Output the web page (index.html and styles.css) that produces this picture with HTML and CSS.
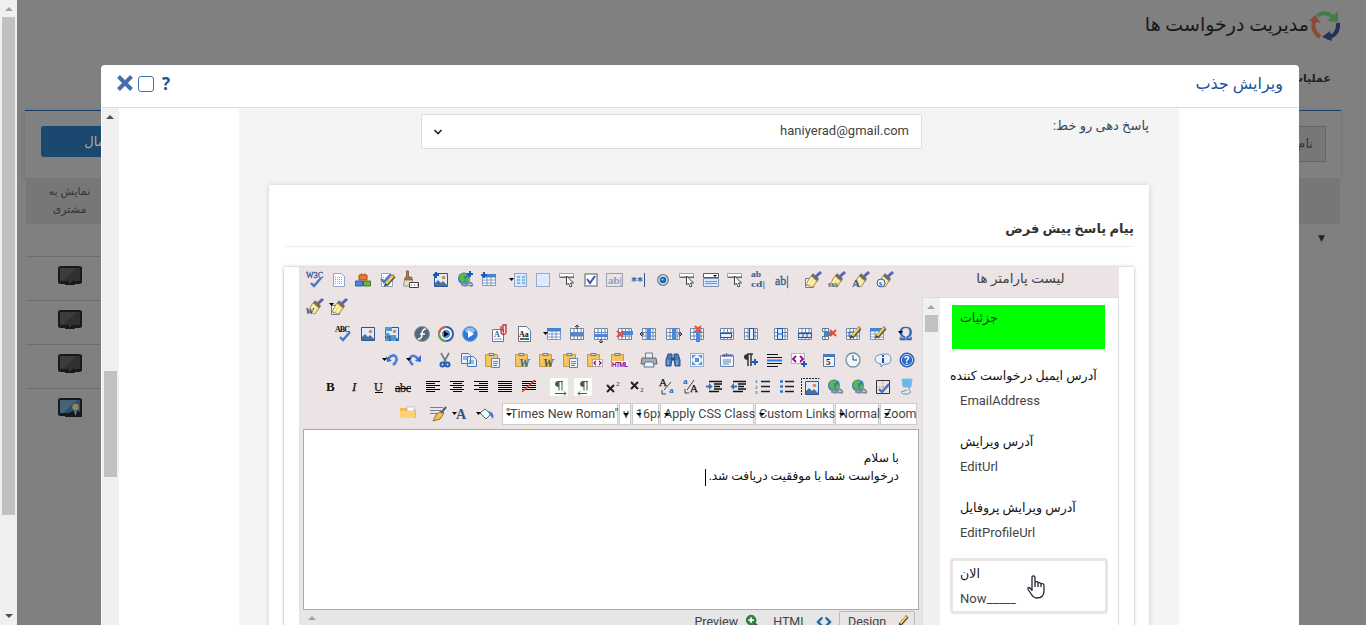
FILE: index.html
```html
<!DOCTYPE html>
<html lang="fa">
<head>
<meta charset="utf-8">
<title>مدیریت درخواست ها</title>
<link rel="stylesheet" href="styles.css">
</head>
<body>
<svg class="defs" aria-hidden="true">
  <symbol id="img" viewBox="0 0 16 16"><path fill="#dcecff" stroke="#2757a0" d="M1.500 1.500h13v13h-13z"/><path fill="#536c94" d="M2 14v-3l3-3 3 3 2-2 4 4v1z"/><circle cx="10.500" cy="5.500" r="1.800" fill="#e9853b"/></symbol>
  <symbol id="grid" viewBox="0 0 16 16"><path fill="#fff" stroke="#6d86ab" d="M1.500 2.500h13v11h-13zM1.500 6.500h13M1.500 10h13M5 2.500v11M8.500 2.500v11M12 2.500v11"/></symbol>
  <symbol id="table" viewBox="0 0 16 16"><path fill="#fff" stroke="#7d9ac6" d="M1.500 2.500h13v11h-13zM1.500 8h13M1.500 11h13M6 5v9M10 5v9"/><path fill="#4681d2" d="M1 2h14v3.500h-14z"/></symbol>
  <symbol id="page" viewBox="0 0 16 16"><path fill="#fff" stroke="#8ba6ca" d="M2.500 1.500h8l3 3v10h-11z"/><path stroke="#91a9ca" stroke-dasharray="1 1" d="M4 5.500h7M4 7.500h8M4 9.500h8M4 11.500h8"/></symbol>
  <symbol id="check" viewBox="0 0 16 16"><path fill="none" stroke="#4775c6" stroke-width="2.300" d="M4 11l3 3 7-8"/></symbol>
  <symbol id="globe" viewBox="0 0 16 16"><circle cx="7" cy="6.500" r="6" fill="#2d78c8"/><path fill="#5db743" d="M3 2l5-1 2 2-3 2 1 3-3 3-3-4zm7 3l3 1-2 5-3-2z"/><path fill="none" stroke="#778da2" stroke-width="1.800" d="M5 12q2-3 4 0t-4 1zm5 0q3-3 5 0t-5 1"/></symbol>
  <symbol id="plus" viewBox="0 0 16 16"><path stroke="#2058b8" stroke-width="2" d="M3 0v6M0 3h6"/></symbol>
  <symbol id="button" viewBox="0 0 16 16"><path fill="#fff" stroke="#94a7b4" d="M.5 1.500h14v4h-14z"/><path fill="#536e80" d="M1 4.500h14v1.500h-14z"/><path fill="#fff" stroke="#444" d="M7.500 4v9l2-2 1.500 4 2-1-1.500-3h3z"/></symbol>
  <symbol id="dd" viewBox="0 0 16 16"><path d="M-2 6h5l-2.500 3z"/></symbol>
  <symbol id="brush" viewBox="0 0 16 16"><path fill="#f6dc80" stroke="#9a854b" stroke-width=".8" d="M5 5l3-2 5 5-5 7-7-2z"/><path stroke="#fff8c6" stroke-width="1.500" d="M7 6l-4 6m6-4l-3 6"/><path stroke="#6f6d64" stroke-width="3.200" d="M7 2.500l6 5.500"/><path stroke="#5861b5" stroke-width="3" d="M11 4.500L16 0"/></symbol>
  <symbol id="pencil" viewBox="0 0 16 16"><path stroke="#5a5135" stroke-width="4" d="M6 12l8-9"/><path stroke="#f2ce5c" stroke-width="2.400" d="M6 11l7-8"/><path fill="#333" d="M4 14l1-4 2 2z"/><path stroke="#d37b73" stroke-width="3" d="M13 3l1-1"/></symbol>
  <symbol id="clip" viewBox="0 0 16 16"><path fill="#f5c45c" stroke="#c19b53" d="M.5 2.500h12v12h-12z"/><path fill="#ddd" stroke="#777" d="M4 3.500v-2h5v2z"/></symbol>
  <symbol id="sheet" viewBox="0 0 16 16"><path fill="#eef5ff" stroke="#6482a9" d="M6.500 6.500h8v9h-8zM8 9.500h5M8 11.500h5M8 13.500h4"/></symbol>
  <symbol id="redx" viewBox="0 0 16 16"><path stroke="#f04b30" stroke-width="2" d="M0 5l6 6m0-6l-6 6"/></symbol>
  <symbol id="mon" viewBox="0 0 24 19"><rect width="24" height="18" rx="2.500" fill="#18181e"/><path fill="#303030" d="M2 2h20v13h-20z"/><path fill="#3c3c3c" d="M2 2h17l-14 13h-3z"/><path fill="#18181e" d="M7 17h10v2h-10z"/><path fill="#55555d" d="M11 15.500h2v1h-2z"/></symbol>
</svg>

<div class="scrollbar outer"><i class="up faded"></i><div class="thumb"></div><i class="down"></i></div>
<main class="page">
  <header class="top"><svg class="logo" viewBox="0 0 32 32"><g fill="none" stroke-width="4"><path stroke="#437c49" d="M8 6q8-6 16 1"/><path stroke="#8a4b35" d="M6 9q-5 11 5 18"/><path stroke="#24315b" d="M29 13q1 12-11 15"/></g><path fill="#437c49" d="M29 1v11l-11-1z"/><path fill="#8a4b35" d="M0 11L6 5l6 8z"/><path fill="#24315b" d="M13 27l8-6 2 10z"/></svg><h1>مدیریت درخواست ها</h1></header>
  <div class="optitle">عملیات</div>
  <section class="filter"><div class="name">نام</div><div class="apply">اعمال</div></section>
  <div class="thead"><span>نمایش به<br>مشتری</span></div>
  <div class="trow first"><b>▼</b></div>
  <div class="trow"><svg><use href="#mon"/></svg></div>
  <div class="trow"><svg><use href="#mon"/></svg></div>
  <div class="trow"><svg><use href="#mon"/></svg></div>
  <div class="trow"><svg viewBox="0 0 24 19"><use href="#mon" width="24" height="19"/><path fill="#2d506f" d="M2 2h20v13h-20z"/><path fill="#466075" d="M2 2h17l-14 13h-3z"/><path fill="#18181c" d="M11 19v-4l4-2h5l4 2v4z"/><circle cx="17.500" cy="9" r="3.200" fill="#9b8450"/><path fill="#718294" d="M16 13h3l-1.500 5z"/></svg></div>
</main>

<div class="modal">
  <div class="mhead">
    <svg class="x" viewBox="0 0 16 16"><path stroke="#456faa" stroke-width="4" d="M1.500 1.500l13 13m0-13l-13 13"/></svg><i class="max"></i><b class="help">?</b>
    <h2>ویرایش جذب</h2>
  </div>
  <div class="mbody">
    <div class="scrollbar inner"><i class="up"></i><div class="thumb"></div></div>
    <div class="form">
      <div class="field"><label>پاسخ دهی رو خط:</label><div class="select"><svg viewBox="0 0 10 8"><path d="M1.500 2l3.500 3.500 3.500-3.500" fill="none" stroke="#222" stroke-width="1.600"/></svg><span>haniyerad@gmail.com</span></div></div>
      <div class="card">
        <h3>پیام پاسخ پیش فرض</h3>
        <div class="box"><div class="editor">
          <div class="work">
            <div class="tools">
              <div class="tr">
                <div class="g">
                  <svg viewBox="0 0 16 16"><text class="serif thinblue" x="-1" y="6" font-size="8" textLength="17">W3C</text><use href="#check"/></svg>
                  <svg><use href="#page"/></svg>
                  <svg viewBox="0 0 16 16"><path fill="#ef7728" stroke="#b44d20" d="M4 3h2v-1h1v1h2v-1h1v1h2v5h-8z"/><path fill="#4889da" stroke="#315f9e" d="M.5 9h7v5h-7z"/><path fill="#70b43a" stroke="#45762e" d="M8.500 9h7v5h-7z"/></svg>
                  <svg viewBox="0 0 16 16"><use href="#page"/><use href="#check" x="-2" y="-4"/><use href="#pencil" x="1" y="1"/></svg>
                  <svg viewBox="0 0 16 16"><path fill="#b17848" stroke="#67472f" stroke-width=".7" d="M3.500-1h2v6h3l1 3h-8l1-3h1z"/><path fill="#e8dcc4" stroke="#777" stroke-width=".7" d="M1.500 8h8l-1 6h-8z"/><path fill="#fff" stroke="#444" d="M6.500 10.500h9v5h-9z"/><path stroke="#333" stroke-dasharray="1 2" d="M8 13h7"/></svg>
                </div>
                <div class="g">
                  <svg viewBox="0 0 16 16"><use href="#img"/><use href="#plus"/></svg>
                  <svg viewBox="0 0 16 16"><use href="#globe"/><use href="#plus" x="10" y="-1"/></svg>
                  <svg viewBox="0 0 16 16"><use href="#table"/><use href="#plus"/></svg>
                </div>
                <div class="g">
                  <svg viewBox="0 0 16 16"><path fill="#d7e8ff" stroke="#486c96" stroke-dasharray="1 1" d="M3.500 1.500h12v13h-12z"/><path stroke="#258ad0" d="M6 5h3m2 0h3M6 8h3m2 0h3M6 11h3m2 0h3"/><use href="#dd"/></svg>
                  <svg viewBox="0 0 16 16"><path fill="#dceaff" stroke="#4f6d94" stroke-dasharray="1 1" d="M1.500 1.500h13v13h-13z"/></svg>
                  <svg><use href="#button"/></svg>
                  <svg viewBox="0 0 16 16"><path fill="#fff" stroke="#8a8f96" stroke-width="1.500" d="M2 2h12v12h-12z"/><path fill="none" stroke="#3858a0" stroke-width="2" d="M4 7l3 4 5-7"/></svg>
                  <svg viewBox="0 0 16 16"><path fill="none" stroke="#4c5e80" stroke-dasharray="1 1" d="M-.5 1.500h16v13h-16z"/><text class="serif pale" x="1" y="12" font-size="11">ab|</text></svg>
                  <svg viewBox="0 0 16 16"><text class="serif" x="0" y="13" font-size="12">**</text><path stroke="#38518e" d="M13.500 1v14"/></svg>
                  <svg viewBox="0 0 16 16"><circle cx="8" cy="8" r="5.300" fill="#d9e6ed" stroke="#6f7b83" stroke-width="1.300"/><circle cx="8" cy="8" r="3.300" fill="#176bb0"/><circle cx="7.500" cy="7.500" r="1" fill="#a8dff5"/></svg>
                  <svg><use href="#button"/></svg>
                  <svg viewBox="0 0 16 16"><path fill="#fff" stroke="#565d65" d="M.5 1.500h15v4h-15z"/><path fill="#dceaff" stroke="#7891bb" d="M.5 6.500h15v8h-15zM2 9.500h12M2 11.500h12"/><path d="M10 3h4l-2 2z"/></svg>
                  <svg><use href="#button"/></svg>
                  <svg viewBox="0 0 16 16"><text class="serif" x="0" y="5" font-size="8" textLength="10" lengthAdjust="spacingAndGlyphs">ab</text><text class="serif" x="0" y="15" font-size="8" textLength="14" lengthAdjust="spacingAndGlyphs">cd|</text></svg>
                  <svg viewBox="0 0 16 16"><text class="serif thinblue" x="0" y="13" font-size="12">ab|</text></svg>
                </div>
                <div class="g">
                  <svg viewBox="0 0 16 16"><use href="#sheet" x="-6"/><use href="#brush"/></svg>
                  <svg viewBox="0 0 16 16"><use href="#brush"/><text class="serif" x="-1" y="15" font-size="8">css</text></svg>
                  <svg viewBox="0 0 16 16"><use href="#brush"/><text class="serif" x="-1" y="15" font-size="11">A</text></svg>
                  <svg viewBox="0 0 16 16"><use href="#brush"/><circle cx="4" cy="11" r="4" fill="#eef2ff" stroke="#365eab"/><text class="serif" x="2" y="14" font-size="8">s</text></svg>
                </div>
              </div>
              <div class="tr"><div class="g">
                <svg viewBox="0 0 16 16"><use href="#brush"/><text class="serif it" x="-1" y="15" font-size="12">w</text></svg>
                <svg viewBox="0 0 16 16"><use href="#sheet" x="-6"/><use href="#brush"/><use href="#dd" y="-2"/></svg>
              </div></div>
              <div class="tr end">
                <div class="g shift">
                  <svg viewBox="0 0 16 16"><text class="serif black" x="-1" y="6" font-size="8" textLength="15">ABC</text><use href="#check"/></svg>
                  <svg><use href="#img"/></svg>
                  <svg viewBox="0 0 16 16"><use href="#img"/><path fill="#4d99d9" d="M1 1h7v4h-7zM1 7h4v3h-4zM1 12h4v3h-4zM7 9h5v6h-5z"/></svg>
                </div>
                <div class="g shift">
                  <svg viewBox="0 0 16 16"><circle cx="8" cy="8" r="7.500" fill="#56677a" stroke="#8d98a2"/><path fill="none" stroke="#fff" stroke-width="1.500" d="M12 3q-4 0-4 5t-4 5M6 8h5"/></svg>
                  <svg viewBox="0 0 16 16"><circle cx="8" cy="8" r="7" fill="#fff" stroke="#315ea7" stroke-width="2"/><path fill="none" stroke="#e46534" stroke-width="2" d="M1 8A7 7 0 0 1 8 1"/><path fill="none" stroke="#6dab3f" stroke-width="2" d="M1 8a7 7 0 0 0 7 7"/><circle cx="8" cy="8" r="4.300" fill="#568dda"/><path d="M6 5l5 3-5 3z"/></svg>
                  <svg viewBox="0 0 16 16"><circle cx="8" cy="8" r="7.500" fill="#2979df" stroke="#87a7d4"/><ellipse cx="8" cy="4.500" rx="5" ry="3" fill="#8dbdf3"/><path fill="#fff" d="M6 4l6 4-6 4z"/></svg>
                </div>
                <div class="g shift">
                  <svg viewBox="0 0 16 16"><path fill="#fff" stroke="#667995" d="M.5 3.500h11v12h-11z"/><text class="serif" x="2" y="11" font-size="8">A</text><path stroke="#879ab5" d="M2 13h8"/><path fill="none" stroke="#bb3030" stroke-width="1.300" d="M9 0v7q3 3 5 0v-8h-3v7"/></svg>
                  <svg viewBox="0 0 16 16"><path fill="#fff" stroke="#6d7782" d="M2.500.5h8l4 4v11h-12z"/><text class="serif black" x="3" y="11" font-size="8">Aa</text><path stroke="#b53c32" stroke-width="2" d="M4 13h3"/><path stroke="#3d963a" stroke-width="2" d="M7 13h3"/><path stroke="#4558c1" stroke-width="2" d="M10 13h3"/></svg>
                </div>
                <div class="g">
                  <svg viewBox="0 0 16 16"><use href="#table" x="1"/><use href="#dd" x="0"/></svg>
                  <svg viewBox="0 0 16 16"><use href="#grid"/><path fill="#4d86df" d="M1 7h14v3h-14z"/><path fill="none" stroke="#234" d="M8 3v-4m-2 2l2-2 2 2"/></svg>
                  <svg viewBox="0 0 16 16"><use href="#grid"/><path fill="#4d86df" d="M1 8h14v3h-14z"/><path fill="none" stroke="#234" d="M8 13v4m-2-2l2 2 2-2"/></svg>
                  <svg viewBox="0 0 16 16"><use href="#grid"/><path fill="#4d86df" d="M5 5h11v4h-11z"/><use href="#redx"/></svg>
                  <svg viewBox="0 0 16 16"><use href="#grid"/><path fill="#4d86df" d="M6 2h4v12h-4z"/><path fill="none" stroke="#234" d="M3 8h-4m2-2l-2 2 2 2"/></svg>
                  <svg viewBox="0 0 16 16"><use href="#grid"/><path fill="#4d86df" d="M7 2h4v12h-4z"/><path fill="none" stroke="#234" d="M13 8h4m-2-2l2 2-2 2"/></svg>
                  <svg viewBox="0 0 16 16"><use href="#grid"/><path fill="#4d86df" d="M7 4h4v12h-4z"/><use href="#redx" x="6" y="-5"/></svg>
                </div>
                <div class="g">
                  <svg viewBox="0 0 16 16"><use href="#grid"/><path fill="#e8f1ff" stroke="#1853aa" d="M1.500 7.500h11v4h-11z"/></svg>
                  <svg viewBox="0 0 16 16"><use href="#grid"/><path fill="#e8f1ff" stroke="#1853aa" d="M6.500 2.500h4v11h-4z"/></svg>
                </div>
                <div class="g">
                  <svg viewBox="0 0 16 16"><use href="#grid"/><path fill="#d6e5ff" stroke="#1853aa" d="M4.500 2.500h5v11h-5zM4.500 8h5"/></svg>
                  <svg viewBox="0 0 16 16"><use href="#grid"/><path fill="#d6e5ff" stroke="#1853aa" d="M1.500 7.500h13v4h-13zM6 7.500v4M10 7.500v4"/></svg>
                  <svg viewBox="0 0 16 16"><path fill="#fff" stroke="#57799c" d="M1.500 2.500h6v3h-6zM1.500 10.500h6v3h-6zM4 3v10"/><path fill="#4b82be" d="M3 6h8v4h-8z"/><use href="#redx" x="9" y="-1"/></svg>
                  <svg viewBox="0 0 16 16"><use href="#grid"/><path stroke="#2f6dc6" fill="none" d="M4 6h5v5h-5z"/><use href="#pencil" x="1" y="-1"/></svg>
                  <svg viewBox="0 0 16 16"><use href="#table"/><use href="#pencil" x="2" y="-1"/></svg>
                </div>
                <div class="g"><svg viewBox="0 0 16 16"><text class="omega" x="0" y="14" font-size="18">Ω</text><use href="#dd" x="1" y="-1"/></svg></div>
              </div>
              <div class="tr end">
                <div class="g">
                  <svg viewBox="0 0 16 16"><path fill="none" stroke="#4a80d8" stroke-width="2.600" d="M5 7q5-6 8-2 2 4-3 8"/><path fill="#356fd0" d="M3 4l6 5-5 1z"/><use href="#dd" x="1"/></svg>
                  <svg viewBox="0 0 16 16"><path fill="none" stroke="#4a80d8" stroke-width="2.600" d="M11 7q-5-6-8-1-1 4 3 7"/><path fill="#356fd0" d="M14 3l-6 6 6 1z"/><use href="#dd" x="1"/></svg>
                </div>
                <div class="g">
                  <svg viewBox="0 0 16 16"><path stroke="#65798e" stroke-width="1.600" d="M4 1l5 9m3-9L7 10"/><g fill="none" stroke="#275dbd" stroke-width="2"><circle cx="5.500" cy="12.500" r="2"/><circle cx="10.500" cy="12.500" r="2"/></g></svg>
                  <svg viewBox="0 0 16 16"><path fill="#e7f1ff" stroke="#4a78b7" d="M.5 1.500h7l2 2v8h-9zM6.500 4.500h6l3 3v7h-9zM2 5h4M2 7h4M8 9h5M8 11h5"/></svg>
                  <svg viewBox="0 0 16 16"><use href="#clip"/><use href="#sheet"/></svg>
                </div>
                <div class="g">
                  <svg viewBox="0 0 16 16"><use href="#clip"/><text class="serif it blue" x="4" y="15" font-size="12">W</text></svg>
                  <svg viewBox="0 0 16 16"><use href="#clip"/><text class="serif it grey" x="4" y="15" font-size="12">W</text></svg>
                  <svg viewBox="0 0 16 16"><use href="#clip"/><use href="#sheet"/></svg>
                  <svg viewBox="0 0 16 16"><use href="#clip"/><path fill="#fff" stroke="#777" stroke-dasharray="1 1" d="M5.500 7.500h10v7h-10z"/><path fill="none" stroke="#940092" stroke-width="1.300" d="M9 9l-2 2 2 2m3-4l2 2-2 2"/></svg>
                  <svg viewBox="0 0 16 16"><use href="#clip"/><path fill="#fff" d="M1 9h16v6h-16z"/><text class="html" x="1" y="15" textLength="16">HTML</text></svg>
                </div>
                <div class="g">
                  <svg viewBox="0 0 16 16"><path fill="#e8f1fa" stroke="#75828e" d="M4.500 6v-5h7v5"/><path fill="#a3adb6" stroke="#5c6975" d="M1 6h14l1 6h-16z"/><path fill="#eaf3ff" stroke="#6a7782" d="M4 10h8l1 5h-10z"/></svg>
                  <svg viewBox="0 0 16 16"><path fill="#4c78b4" stroke="#24528e" d="M3 2h4v5l-1 7h-5v-6zM9 2h4l2 6v6h-5l-1-7z"/><path stroke="#24528e" stroke-width="3" d="M6 7h4"/><path stroke="#9bc0eb" d="M3 8v5m9-5v5"/></svg>
                  <svg viewBox="0 0 16 16"><path fill="#e9f3ff" stroke="#426fa7" stroke-dasharray="1 1" d="M1.500 1.500h13v13h-13z"/><path fill="#5b92d8" d="M3 3h4L3 7zM9 3h4v4zM3 9l4 4h-4zM13 9v4h-4z"/><path fill="#5b92d8" d="M6 6h4v4h-4z"/></svg>
                </div>
                <div class="g">
                  <svg viewBox="0 0 16 16"><path fill="#edf4ff" stroke="#6783ac" d="M1.500 3.500h13v11h-13zM4 8h8M4 10h8M4 12h6"/><text class="serif" x="3" y="5" font-size="7">abc</text></svg>
                  <svg viewBox="0 0 16 16"><path fill="none" stroke="#333" stroke-width="1.500" d="M5 14v-12h5m-2 0v12"/><path fill="#333" d="M5 8q-4 0-4-3t4-3z"/><use href="#plus" x="9" y="7"/></svg>
                  <svg viewBox="0 0 16 16"><path stroke="#111" d="M0 2.500h11M0 5.500h15M0 11.500h15M0 14.500h11"/><path stroke="#397bd8" stroke-width="2" d="M0 8.500h15"/></svg>
                  <svg viewBox="0 0 16 16"><path fill="#fff" stroke="#777" stroke-dasharray="1 1" d="M.5 1.500h13v10h-13z"/><path fill="none" stroke="#a0009c" stroke-width="1.800" d="M5 4l-3 3 3 3m4-6l3 3-3 3"/><use href="#plus" x="10" y="9"/></svg>
                </div>
                <div class="g">
                  <svg viewBox="0 0 16 16"><path fill="#eef5ff" stroke="#5a79a4" d="M2.500 2.500h11v12h-11z"/><path fill="#487ac1" d="M2 2h12v3h-12z"/><text class="serif black" x="5" y="13" font-size="9">5</text></svg>
                  <svg viewBox="0 0 16 16"><circle cx="8" cy="8" r="7" fill="#edf7ff" stroke="#7b8ca1" stroke-width="1.300"/><path fill="none" stroke="#345" d="M8 3v5h4"/></svg>
                </div>
                <div class="g">
                  <svg viewBox="0 0 16 16"><path fill="#e9f3ff" stroke="#6f90b6" d="M6 12Q0 11 0 7t8-5 8 5-7 5l-3 3z"/><path stroke="#204f9c" stroke-width="2" d="M8 3v2m0 1v5"/></svg>
                  <svg viewBox="0 0 16 16"><circle cx="8" cy="8" r="7" fill="#2868c9" stroke="#20509d"/><circle cx="8" cy="8" r="5.600" fill="none" stroke="#bad9ff"/><text class="q" x="5" y="12">?</text></svg>
                </div>
              </div>
              <div class="tr end">
                <div class="g">
                  <svg viewBox="0 0 16 16"><text class="serif black" x="3" y="12" font-size="13">B</text></svg>
                  <svg viewBox="0 0 16 16"><text class="serif black it thin" x="5" y="12" font-size="13">I</text></svg>
                  <svg viewBox="0 0 16 16"><text class="serif black thin" x="3" y="12" font-size="12">U</text><path stroke="#000" d="M4 13.500h8"/></svg>
                  <svg viewBox="0 0 16 16"><text class="serif black thin" x="0" y="13" font-size="12" textLength="16">abc</text><path stroke="#000" d="M0 9.500h16"/></svg>
                </div>
                <div class="g">
                  <svg viewBox="0 0 16 16"><path stroke="#000" d="M1 2.500h14M1 4.500h9M1 6.500h14M1 8.500h9M1 10.500h14M1 12.500h9"/></svg>
                  <svg viewBox="0 0 16 16"><path stroke="#000" d="M1 2.500h14M4 4.500h9M1 6.500h14M4 8.500h9M1 10.500h14M4 12.500h9"/></svg>
                  <svg viewBox="0 0 16 16"><path stroke="#000" d="M1 2.500h14M6 4.500h9M1 6.500h14M6 8.500h9M1 10.500h14M6 12.500h9"/></svg>
                  <svg viewBox="0 0 16 16"><path stroke="#000" d="M1 2.500h14M1 4.500h14M1 6.500h14M1 8.500h14M1 10.500h14M1 12.500h14"/></svg>
                  <svg viewBox="0 0 16 16"><path stroke="#000" d="M1 2.500h14M1 4.500h14M1 6.500h14M1 8.500h14M1 10.500h14"/><path stroke="#e74627" stroke-width="1.600" d="M1 13L14 1"/></svg>
                </div>
                <div class="g">
                  <svg viewBox="0 0 16 16"><path fill="#f7fff7" d="M-1-1h18v18h-18z"/><path fill="none" stroke="#555" d="M12 2.500h-6m2 0v9m3-9v9M4 14.500h11m-2-2l2 2-2 2"/><path fill="#555" d="M8 2q-4 0-4 3t4 3z"/></svg>
                  <svg viewBox="0 0 16 16"><path fill="#f7fff7" d="M-1-1h18v18h-18z"/><path fill="none" stroke="#555" d="M13 2.500h-6m2 0v9m3-9v9M12 14.500h-9m2-2l-2 2 2 2"/><path fill="#555" d="M9 2q-4 0-4 3t4 3z"/></svg>
                </div>
                <div class="g">
                  <svg viewBox="0 0 16 16"><path stroke="#222" stroke-width="2" d="M2 6l7 7m0-7l-7 7"/><text class="serif blue" x="11" y="7" font-size="7">2</text></svg>
                  <svg viewBox="0 0 16 16"><path stroke="#222" stroke-width="2" d="M2 3l7 7m0-7l-7 7"/><text class="serif blue" x="11" y="13" font-size="7">2</text></svg>
                </div>
                <div class="g">
                  <svg viewBox="0 0 16 16"><text class="serif black thin" x="0" y="7" font-size="11">A</text><text class="serif blue" x="10" y="14" font-size="9">a</text><path fill="none" stroke="#345" d="M12 3l-7 8M3 11v4h4"/></svg>
                  <svg viewBox="0 0 16 16"><text class="serif blue" x="0" y="5" font-size="9">a</text><text class="serif black thin" x="7" y="13" font-size="11">A</text><path fill="none" stroke="#345" d="M11 1L4 11M2 10v4h4"/></svg>
                  <svg viewBox="0 0 16 16"><path stroke="#111" stroke-width="1.400" d="M2 2.500h13M7 5h8M7 7.500h6M7 10h8M2 12.500h10"/><path fill="#3270c0" d="M-1 6.500h3v-2.500l3.500 3.500-3.500 3.500v-2.500h-3z"/></svg>
                  <svg viewBox="0 0 16 16"><path stroke="#111" stroke-width="1.400" d="M2 2.500h13M7 5h8M7 7.500h6M7 10h8M2 12.500h10"/><path fill="#3270c0" d="M6 6.500h-3v-2.500l-3.500 3.500 3.500 3.500v-2.500h3z"/></svg>
                  <svg viewBox="0 0 16 16"><path stroke="#222" stroke-width="1.300" d="M6 2.500h9M6 7.500h9M6 12.500h9"/><text class="serif blue" x="0" y="4" font-size="5">1</text><text class="serif blue" x="0" y="9.500" font-size="5">2</text><text class="serif blue" x="0" y="15" font-size="5">3</text></svg>
                  <svg viewBox="0 0 16 16"><path stroke="#222" stroke-width="1.300" d="M6 2.500h9M6 7.500h9M6 12.500h9"/><path stroke="#3979cd" stroke-width="2.500" d="M1 2.500h3M1 7.500h3M1 12.500h3"/></svg>
                  <svg viewBox="0 0 16 16"><path fill="none" stroke="#222" stroke-dasharray="2 1" d="M-1.500 16v-16.500h18"/><use href="#img" x="1" y="1"/></svg>
                  <svg><use href="#globe"/></svg>
                  <svg><use href="#globe"/></svg>
                  <svg viewBox="0 0 16 16"><path fill="none" stroke="#333" d="M1.500 1.500h13v13h-13z"/><path stroke="#999" stroke-dasharray="1 1" d="M2 8h12M8 2v12"/><use href="#check" y="-1"/></svg>
                  <svg viewBox="0 0 16 16"><path fill="#66b9ef" stroke="#8cbcd8" d="M3 0h10l-1 8h-8z"/><path fill="#d6edf4" stroke="#7698a2" d="M10 8v3l2 2-3 2h-5l-2-2 6-2"/></svg>
                </div>
              </div>
              <div class="tr end">
                <div class="g"><svg viewBox="0 0 16 16"><path fill="#f4b954" d="M0 2h7l1 2h8v8h-16z"/><path fill="#fff" stroke="#999" stroke-width=".5" d="M7 1h7v4h-7z"/><path fill="#ffd172" d="M0 5h15v7h-15z"/></svg></div>
                <div class="g">
                  <svg viewBox="0 0 16 16"><path stroke="#718095" d="M0 1.500h13M0 4.500h11M0 7.500h8"/><path fill="#f4c05a" stroke="#926e32" d="M3 15l3-6 5-4 3 2-4 6z"/><path stroke="#425c80" stroke-width="2" d="M11 7l5-6"/></svg>
                  <svg viewBox="0 0 16 16"><text class="serif blue dark" x="2" y="13" font-size="14">A</text><use href="#dd" x="0"/></svg>
                  <svg viewBox="0 0 16 16"><path fill="#edf6fd" stroke="#4e6b88" d="M2 7l5-4 6 5-5 5z"/><path fill="#387ac4" d="M10 5q7 1 5 8l-3-4z"/><use href="#dd"/></svg>
                </div>
                <div class="combos"><span style="width:116px">"Times New Roman"</span><span style="width:12px">v</span><span style="width:27px">16px</span><span style="width:94px">Apply CSS Class</span><span style="width:79px">Custom Links</span><span style="width:44px">Normal</span><span style="width:37px">Zoom</span></div>
              </div>
            </div>
            <div class="content" dir="rtl"><p>با سلام</p><p>درخواست شما با موفقیت دریافت شد. <i></i></p></div>
            <div class="modes"><i class="up faded"></i><span class="preview">Preview <svg viewBox="0 0 16 16"><path stroke="#555" stroke-width="3" d="M10 10l5 5"/><circle cx="7" cy="7" r="5.500" fill="#348640" stroke="#286637"/><path stroke="#fff" stroke-width="2" d="M7 4v6M4 7h6"/></svg></span><span class="source">HTML <svg viewBox="0 0 16 16"><path fill="none" stroke="#1767a7" stroke-width="2.500" d="M6 4L1 9l5 5m4-10l5 5-5 5"/></svg></span><span class="active">Design <svg viewBox="0 0 16 16"><use href="#pencil"/></svg></span></div>
          </div>
          <aside>
            <h4>لیست پارامتر ها</h4>
            <div class="params"><div class="scrollbar mini"><i class="up faded"></i><div class="thumb"></div></div>
              <div class="items">
                <div class="item green"><b>جزئیات</b></div>
                <div class="item long"><b>آدرس ایمیل درخواست کننده</b><span>EmailAddress</span></div>
                <div class="item"><b>آدرس ویرایش</b><span>EditUrl</span></div>
                <div class="item"><b>آدرس ویرایش پروفایل</b><span>EditProfileUrl</span></div>
                <div class="item hover"><b>الان</b><span>Now_____</span><svg class="hand" viewBox="0 0 18 24"><path fill="#fff" stroke="#222633" stroke-width="1.300" stroke-linejoin="round" d="M5 14V2.500q0-1.700 1.500-1.700T8 2.500V7q2.500-1 3 .8 2.400-.8 3 1 2.800-.8 3 1.400V16q0 7-7.500 7-3 0-5-3.500l-3.400-5Q.5 12.500 2 12.500q1 0 3 3zM8 7v5m3-4v4m3-3v3"/></svg></div>
              </div>
            </div>
          </aside>
        </div></div>
      </div>
    </div>
  </div>
</div>
</body>
</html>
```
FILE: styles.css
```css
* { box-sizing: border-box; }
body { margin: 0; width: 1366px; height: 625px; overflow: hidden; position: relative; display: flex; background: #808080; font-family: Roboto, "DejaVu Sans", sans-serif; font-size: 13px; color: #444; }
h1, h2, h3, h4, p { margin: 0; font-weight: 400; }
svg { overflow: visible; flex: none; }
symbol { overflow: visible; }
.defs { position: absolute; width: 0; height: 0; }
.scrollbar { width: 17px; background: #f0f0f0; display: flex; flex-direction: column; align-items: center; flex: none; }
.scrollbar .thumb { width: 13px; background: #c1c1c1; }
.up, .down { border: 4px solid transparent; border-top: 0; border-bottom: 4px solid #505050; width: 0; height: 0; flex: none; }
.down { border-top: 4px solid #505050; border-bottom: 0; }
.faded { border-bottom-color: #a3a3a3; }
.outer .up { margin: 7px 0 6px; }
.outer .thumb { height: 498px; }
.outer .down { margin-top: 99px; }

.page { flex: 1; direction: rtl; padding: 0 25px 0 8px; min-width: 0; }
.top { display: flex; height: 65px; padding-top: 9px; }
.logo { width: 32px; height: 34px; }
.top h1 { font-size: 19px; line-height: 31px; color: #191919; white-space: nowrap; }
.optitle { height: 45px; padding: 7px 10px; font-size: 11px; font-weight: 700; color: #1e2225; }
.filter { height: 68px; border-top: 1px solid #173e65; padding: 15px; display: flex; justify-content: space-between; box-shadow: 0 1px 4px #6f6f6f; }
.name { width: 120px; height: 36px; border: 1px solid #666; background: #777; padding: 9px 12px; color: #333; }
.apply { width: 119px; height: 31px; margin-left: 1px; background: #1b486e; border-radius: 3px; text-align: center; line-height: 31px; color: #aaa; font-size: 13px; }
.thead { height: 46px; background: #777; margin: 0 1px; display: flex; justify-content: flex-end; text-align: center; font-size: 11px; line-height: 18px; padding: 5px 0; color: #303438; }
.thead span { width: 87px; }
.trow { height: 44px; border-top: 1px solid #6c6c6c; display: flex; justify-content: flex-end; padding: 9px 32px 0 0; margin: 0 41px 0 1px; }
.trow svg { width: 24px; height: 19px; margin-left: 32px; }
.trow.first { height: 32px; border: 0; justify-content: flex-start; margin-right: 1px; padding: 9px 15px; font-size: 9px; color: #202428; }

.modal { position: absolute; left: 101px; top: 65px; width: 1198px; height: 560px; background: #fff; border-radius: 4px 4px 0 0; padding-left: 1px; display: flex; flex-direction: column; overflow: hidden; }
.mhead { height: 43px; border-bottom: 1px solid #ddd; display: flex; align-items: center; padding: 0 16px 6px 15px; color: #20529a; flex: none; }
.x { width: 16px; height: 16px; }
.max { width: 16px; height: 16px; border: 1.500px solid #456faa; border-radius: 3px; margin: 2px 8px 0 5px; }
.help { font: 700 17px "Open Sans", sans-serif; }
.mhead h2 { margin-left: auto; font-size: 16px; }
.mbody { flex: 1; display: flex; min-height: 0; }
.inner { padding-right: 1px; }
.inner .up { margin: 7px 0 252px; }
.inner .thumb { height: 106px; }
.form { width: 940px; margin-left: 120px; background: #f4f4f4; padding: 6px 30px 0; }
.field { direction: rtl; height: 71px; display: flex; }
.field label { width: 227px; padding-top: 4px; font-size: 13px; color: #34475b; }
.select { direction: ltr; width: 501px; height: 35px; background: #fff; border: 1px solid #dcdcdc; border-radius: 2px; display: flex; justify-content: space-between; align-items: center; padding: 0 12px 3px 11px; }
.select svg { width: 10px; height: 8px; margin-top: 4px; }
.card { background: #fff; height: 470px; box-shadow: 0 0 5px #ccc; padding: 30px 15px; }
.card h3 { direction: rtl; height: 32px; border-bottom: 1px solid #eee; font-size: 13px; font-weight: 700; padding-top: 6px; color: #333; }
.box { margin-top: 20px; height: 380px; padding: 0 15px; box-shadow: 0 0 3px #aaa; }
.editor { display: flex; border-left: 1px solid #e4e4e4; height: 100%; }
.work { width: 622px; border: solid #e6e6e6; border-width: 0 3px; background: #ebe3e4; }
.tools { height: 162px; }
.tr { height: 26.700px; display: flex; gap: 6px; align-items: center; }
.tr.end { justify-content: flex-end; }
.g { display: flex; align-items: center; }
.g svg { width: 16px; height: 16px; margin: 0 4px; }
.shift { margin: 0 -1px 0 1px; }
.serif { font-family: "Liberation Serif", serif; font-weight: 700; fill: #385893; }
.thinblue { font-weight: 400; stroke: #385893; stroke-width: .3px; }
.black { fill: #111; }
.pale { fill: #8e9cc7; }
.grey { fill: #555; }
.blue { fill: #3266b5; }
.dark { fill: #31507f; }
.it { font-style: italic; }
.thin { font-weight: 400; stroke: #111; stroke-width: .25px; }
.omega { font-family: "Liberation Serif", serif; fill: #2c64b2; stroke: #2c64b2; stroke-width: .5px; }
.html { font: 700 6.500px Roboto, sans-serif; fill: #940092; }
.q { font: 700 11px Roboto, sans-serif; fill: #fff; }
.combos { display: flex; gap: 1px; margin: 0 2px 0 -2px; }
.combos span { height: 22px; background: #fff; border: 1px solid #ccc; line-height: 19px; font-size: 12.500px; white-space: nowrap; padding-left: 3px; position: relative; }
.combos span::before { content: ""; position: absolute; left: 3px; top: 9px; border: 3px solid transparent; border-top-color: #000; border-bottom: 0; }
.content { height: 181px; background: #fff; border: 1px solid #aaa; padding: 19px; font: 12.200px "Liberation Serif", "DejaVu Sans", serif; line-height: 18px; color: #111; }
.content i { display: inline-block; height: 17px; border-left: 1px solid #000; vertical-align: middle; }
.modes { height: 36px; background: #e6e6e6; display: flex; padding-right: 4px; font-size: 12.500px; }
.modes .up { margin: 6px auto 0 5px; }
.modes span { display: flex; align-items: flex-start; padding: 3px 8px 0; height: 30px; margin-top: 1px; gap: 7px; }
.modes svg { width: 14px; height: 14px; }
.modes .preview { padding-right: 6px; }
.modes .source { gap: 10px; }
.modes .active { width: 76px; justify-content: space-between; border: 1px solid #bbb; border-radius: 2px; background: #e9e3e3; padding-top: 2px; padding-right: 5px; gap: 0; }
aside { width: 197px; background: #ebe3e4; }
aside h4 { height: 30px; text-align: center; font-size: 13.500px; line-height: 23px; direction: rtl; }
.params { height: 350px; border: 1px solid #ddd; display: flex; background: #fff; }
.mini { width: 17px; padding-right: 1px; }
.mini .up { margin: 7px 0 6px; }
.mini .thumb { height: 17px; }
.items { flex: 1; padding: 7px 10px 5px; }
.item { position: relative; display: flex; flex-direction: column; height: 56px; margin-bottom: 10px; border: 2px solid transparent; padding: 2px 8px; align-items: flex-start; white-space: nowrap; border-radius: 4px; }
.item b { font-weight: 400; font-size: 12.600px; line-height: 23px; color: #111; direction: rtl; }
.item span { line-height: 27px; }
.green { height: 44px; margin: 0 3px 11px 2px; padding: 0 6px; background: #0f0; border-radius: 0; border-color: #0f0; }
.green b { color: #143d14; line-height: 21px; }
.long { padding-left: 0; }
.long b { margin-left: -2px; }
.long span { padding-left: 8px; }
.hover { border: 3px solid #ebe3e4; padding: 1px 7px; }
.hand { position: absolute; left: 74px; top: 14px; width: 18px; height: 24px; }
```
